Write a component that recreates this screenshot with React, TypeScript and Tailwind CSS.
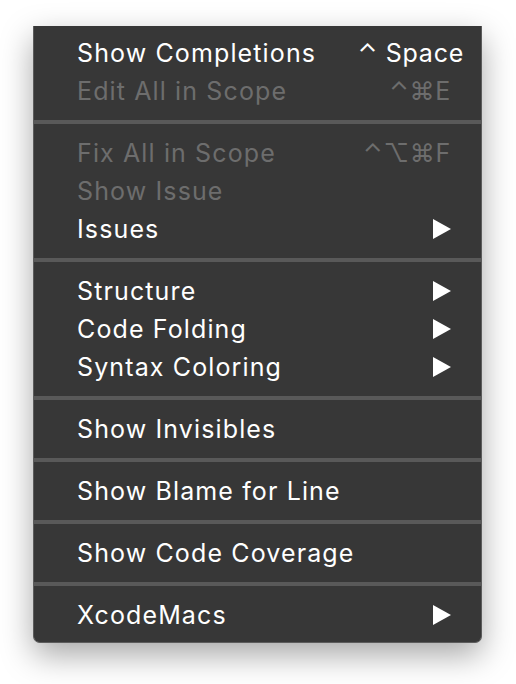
import React from "react";

type Item = {
  label: string;
  shortcut?: string;
  disabled?: boolean;
  submenu?: boolean;
  wide?: boolean;
};

const groups: Item[][] = [
  [
    { label: "Show Completions", shortcut: "⌃ Space", wide: true },
    { label: "Edit All in Scope", shortcut: "⌃⌘E", disabled: true },
  ],
  [
    { label: "Fix All in Scope", shortcut: "⌃⌥⌘F", disabled: true },
    { label: "Show Issue", disabled: true },
    { label: "Issues", submenu: true },
  ],
  [
    { label: "Structure", submenu: true },
    { label: "Code Folding", submenu: true },
    { label: "Syntax Coloring", submenu: true },
  ],
  [{ label: "Show Invisibles" }],
  [{ label: "Show Blame for Line" }],
  [{ label: "Show Code Coverage" }],
  [{ label: "XcodeMacs", submenu: true }],
];

function Arrow() {
  return (
    <svg width="18" height="20" viewBox="0 0 18 20" className="shrink-0">
      <polygon points="0,0 18,10 0,20" fill="#ffffff" />
    </svg>
  );
}

function MenuRow({ item }: { item: Item }) {
  const color = item.disabled ? "text-[#6d6d6d]" : "text-white";
  return (
    <div className={`flex h-[38px] items-center justify-between pl-[43px] pr-[30px] ${color}`}>
      <span className="tracking-[0.045em]">{item.label}</span>
      {item.shortcut && (
        <span className={`tracking-[0.03em] ${item.wide ? "-mr-[13px]" : ""}`}>
          {item.shortcut}
        </span>
      )}
      {item.submenu && <Arrow />}
    </div>
  );
}

export default function App() {
  return (
    <div className="h-[684px] w-[516px] overflow-hidden bg-white pt-[26px] pl-[33px]">
      <div
        className="w-[449px] rounded-b-[7px] border-x border-b border-[#5c5c5c] bg-[#373737] py-[8px] text-[25px] leading-none shadow-[0_12px_32px_rgba(0,0,0,0.35)]"
        style={{ fontFamily: "Inter, 'DejaVu Sans', sans-serif" }}
      >
        {groups.map((group, gi) => (
          <div key={gi}>
            {gi > 0 && (
              <div className="py-[10px]">
                <div className="h-[4px] bg-[#595959]" />
              </div>
            )}
            {group.map((item) => (
              <MenuRow key={item.label} item={item} />
            ))}
          </div>
        ))}
      </div>
    </div>
  );
}
